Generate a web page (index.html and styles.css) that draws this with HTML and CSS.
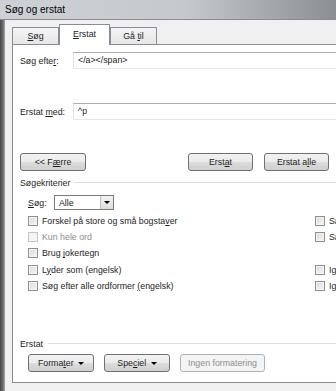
FILE: index.html
```html
<!DOCTYPE html>
<html lang="da">
<head>
  <meta charset="utf-8">
  <title>Søg og erstat</title>
  <link rel="stylesheet" href="styles.css">
</head>
<body>
  <!-- window title -->
  <div class="titlebar">Søg og erstat</div>
  <div class="frame">
    <div class="edge"></div>
    <div class="dialog">
      <!-- tab strip -->
      <div class="tabs">
        <div class="tab"><u>S</u>øg</div>
        <div class="tab active"><u>E</u>rstat</div>
        <div class="tab">Gå <u>t</u>il</div>
      </div>
      <div class="panel">
        <div class="field">
          <label>Søg efte<u>r</u>:</label>
          <div class="input">&lt;/a&gt;&lt;/span&gt;</div>
        </div>
        <div class="field">
          <label>Erstat <u>m</u>ed:</label>
          <div class="input">^p</div>
        </div>
        <!-- action buttons -->
        <div class="actions">
          <button class="btn">&lt;&lt; F<u>æ</u>rre</button>
          <button class="btn btn-replace">Erst<u>a</u>t</button>
          <button class="btn btn-all">Erstat a<u>l</u>le</button>
        </div>
        <!-- search options -->
        <div class="group-title">Søgekriterier</div>
        <div class="search-row">
          <label><u>S</u>øg:</label>
          <div class="select">
            <span>Alle</span>
            <span class="select-arrow"><span class="caret"></span></span>
          </div>
        </div>
        <div class="options">
          <div class="check"><span class="box"></span><span>Forskel på store og små bogsta<u>v</u>er</span></div>
          <div class="check"><span class="box"></span><span>Sammenlign præfiks</span></div>
          <div class="check disabled"><span class="box"></span><span>Kun hele ord</span></div>
          <div class="check"><span class="box"></span><span>Sammenlign suffiks</span></div>
          <div class="check"><span class="box"></span><span>Brug <u>j</u>okertegn</span></div>
          <div></div>
          <div class="check"><span class="box"></span><span>L<u>y</u>der som (engelsk)</span></div>
          <div class="check"><span class="box"></span><span>Ignorer tegnsætningstegn</span></div>
          <div class="check"><span class="box"></span><span>Søg efter alle ordformer <u>(</u>engelsk)</span></div>
          <div class="check"><span class="box"></span><span>Ignorer blanktegn</span></div>
        </div>
        <!-- replace formatting -->
        <div class="replace-group">
          <div class="group-title short">Erstat</div>
          <div class="format-row">
            <button class="btn">Forma<u>t</u>er <span class="caret"></span></button>
            <button class="btn">Spe<u>c</u>iel <span class="caret"></span></button>
            <button class="btn btn-wide" disabled>Ingen formatering</button>
          </div>
        </div>
      </div>
    </div>
  </div>
</body>
</html>
```

FILE: styles.css
```css
/* reset & base font */
* {
  margin: 0;
  padding: 0;
  box-sizing: border-box;
}
body {
  width: 336px;
  height: 391px;
  overflow: hidden;
  background: #f0f0f0;
  font-family: "Liberation Sans", Arial, sans-serif;
  font-size: 8.8px;
  color: #1e1e1e;
}
u {
  text-decoration: underline;
  text-underline-offset: 1px;
}
/* window chrome */
.titlebar {
  height: 20px;
  padding-left: 5px;
  line-height: 20px;
  font-size: 10px;
  color: #000;
  background: linear-gradient(to right, #cdd1d5, #c5c9cd 55%, #8b8e92);
  border-bottom: 1px solid #8c8c8c;
}
.frame {
  display: flex;
  height: 371px;
}
.edge {
  width: 5px;
  flex-shrink: 0;
  background: linear-gradient(to right, #474747, #6c6c6c 60%, #a9a9a9);
}
.dialog {
  width: 480px;
  flex-shrink: 0;
  padding: 4px 0 0 7px;
  background: #f0f0f0;
}
/* tabs */
.tabs {
  display: flex;
  align-items: flex-end;
  height: 20px;
}
.tab {
  height: 17px;
  width: 47px;
  line-height: 16px;
  text-align: center;
  border: 1px solid #898c95;
  border-bottom: none;
  background: linear-gradient(#f4f4f4, #e6e6e6);
}
.tab.active {
  position: relative;
  z-index: 1;
  width: 51px;
  height: 21px;
  margin-bottom: -1px;
  line-height: 18px;
  background: #fff;
}
.panel {
  display: flex;
  flex-direction: column;
  height: 339px;
  padding: 7px 0 10px 7px;
  background: #fff;
  border: 1px solid #898c95;
}
/* find / replace fields */
.field {
  display: flex;
  align-items: center;
  height: 17px;
}
.field + .field {
  margin-top: 34px;
}
.field label {
  width: 53px;
}
.input {
  flex: 1;
  height: 17px;
  padding-left: 4px;
  line-height: 15px;
  border: 1px solid;
  border-color: #abadb3 #dbdfe6 #e3e9ef #e2e3ea;
}
/* buttons */
.actions {
  display: flex;
  margin-top: 33px;
}
.btn {
  width: 66px;
  height: 18px;
  font: inherit;
  color: #1e1e1e;
  border: 1px solid #707070;
  border-radius: 3px;
  background: linear-gradient(#f2f2f2, #ebebeb 50%, #dddddd 50%, #cfcfcf);
}
.btn-replace {
  width: 65px;
  margin-left: 102px;
}
.btn-all {
  width: 65px;
  margin-left: 11px;
}
.btn:disabled {
  color: #8d8d8d;
  border-color: #adb2b5;
  background: #f4f4f4;
}
.btn-wide {
  width: 85px;
}
.caret {
  display: inline-block;
  vertical-align: middle;
  margin-left: 2px;
  border-left: 3px solid transparent;
  border-right: 3px solid transparent;
  border-top: 3px solid #000;
}
/* group boxes */
.group-title {
  display: flex;
  align-items: center;
  height: 11px;
  margin-top: 6px;
}
.group-title::after {
  content: "";
  flex: 1;
  margin-left: 4px;
  border-top: 1px solid #d5dfe5;
}
/* search direction */
.search-row {
  display: flex;
  align-items: center;
  height: 15px;
  margin-top: 7px;
  padding-left: 8px;
}
.search-row label {
  width: 26px;
}
.select {
  display: flex;
  align-items: center;
  justify-content: space-between;
  width: 60px;
  height: 15px;
  padding-left: 4px;
  border: 1px solid #7a7a7a;
}
.select-arrow {
  display: flex;
  align-items: center;
  justify-content: center;
  width: 13px;
  height: 13px;
  border-left: 1px solid #c0c0c0;
  background: linear-gradient(#f2f2f2, #dcdcdc);
}
.select-arrow .caret {
  margin: 0;
}
/* checkboxes */
.options {
  display: grid;
  grid-template-columns: 287px 1fr;
  grid-auto-rows: 16.2px;
  margin-top: 3px;
  padding-left: 8px;
}
.check {
  display: flex;
  align-items: center;
  white-space: nowrap;
}
.box {
  width: 10px;
  height: 10px;
  margin-right: 4px;
  border: 1px solid #8e8f8f;
  background: linear-gradient(135deg, #d9d9d9, #f6f6f6);
  box-shadow: inset 0 0 0 1px #f4f4f4;
}
.check.disabled {
  color: #8d8d8d;
}
.check.disabled .box {
  border-color: #c4c4c4;
  background: #f4f4f4;
}
/* replace formatting group */
.replace-group {
  margin-top: auto;
}
.group-title.short::after {
  margin-left: 5px;
}
.format-row {
  display: flex;
  gap: 10px;
  margin-top: 5px;
  padding-left: 8px;
}
```
